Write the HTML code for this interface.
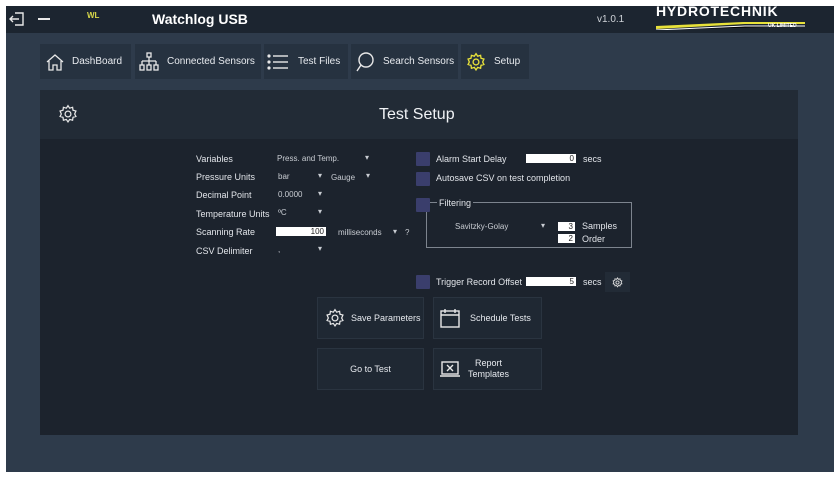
<!DOCTYPE html>
<html><head><meta charset="utf-8"><style>
*{margin:0;padding:0;box-sizing:border-box}
body{width:840px;height:479px;background:#fff;font-family:"Liberation Sans",sans-serif;position:relative;overflow:hidden;color:#e6e9ee}
.a{position:absolute}
#app{left:6px;top:6px;width:828px;height:466px;background:#2e3b4b}
#top{left:6px;top:6px;width:828px;height:27px;background:#1c2530}
.nav{top:44px;height:35px;background:#263240;font-size:10px;color:#e8ebef;display:flex;align-items:center}
.lbl{font-size:9px;color:#e2e5ea}
.dd{font-size:8px;color:#c8ccd2}
.inp{background:#fff;color:#222;font-size:8px;text-align:right;height:9px;line-height:9px;padding-right:2px}
.cb{width:14px;height:14px;background:#3a3e6c;border-radius:1px}
.btn{background:#1f2833;border:1px solid #2a3440;font-size:9px;color:#e6e9ee;display:flex;align-items:center}
svg{display:block}
</style></head><body>
<div class="a" id="app"></div>
<div class="a" id="top"></div>
<svg class="a" style="left:9px;top:11px" width="16" height="16" viewBox="0 0 16 16" fill="none" stroke="#e8e8e8" stroke-width="1.4"><path d="M6 2h8v12H6M1 8h9M4 5L1 8l3 3"/></svg>
<div class="a" style="left:38px;top:18px;width:12px;height:2px;background:#e8e8e8"></div>
<div class="a" style="left:87px;top:11px;font-size:8px;font-weight:bold;color:#d9d94a">WL</div>
<div class="a" style="left:152px;top:11px;font-size:14px;font-weight:bold;color:#fff">Watchlog USB</div>
<div class="a" style="left:597px;top:14px;font-size:10px;color:#cfd3d8">v1.0.1</div>
<div class="a" style="left:656px;top:3px;font-size:14px;font-weight:900;color:#fff;letter-spacing:0.8px">HYDROTECHNIK</div>
<svg class="a" style="left:655px;top:18px" width="152" height="12"><path d="M1 11 L90 6 L150 6 L150 4 L88 4 L1 8Z" fill="#e8e23a"/><path d="M1 12 L90 8 L150 8" stroke="#fff" stroke-width="1"/><text x="113" y="9" font-size="5" fill="#fff" font-family="Liberation Sans" font-weight="bold">UK LIMITED</text></svg>

<div class="a nav" style="left:40px;width:91px"><svg style="margin:0 8px 0 6px" width="18" height="18" viewBox="0 0 18 18" fill="none" stroke="#e8e8e8" stroke-width="1.3"><path d="M1 9L9 2l8 7M3 8v9h4v-5h4v5h4V8"/></svg>DashBoard</div>
<div class="a nav" style="left:135px;width:126px"><svg style="margin:0 8px 0 4px" width="20" height="20" viewBox="0 0 20 20" fill="none" stroke="#e8e8e8" stroke-width="1.3"><rect x="8" y="1" width="4" height="4"/><path d="M10 5v4M3 9h14M3 9v4M10 9v4M17 9v4"/><rect x="1" y="13" width="4" height="5"/><rect x="8" y="13" width="4" height="5"/><rect x="15" y="13" width="4" height="5"/></svg>Connected Sensors</div>
<div class="a nav" style="left:264px;width:84px"><svg style="margin:0 9px 0 3px" width="22" height="18" viewBox="0 0 22 18" fill="#e8e8e8"><circle cx="2" cy="3" r="1.6"/><circle cx="2" cy="9" r="1.6"/><circle cx="2" cy="15" r="1.6"/><rect x="6" y="2.3" width="15" height="1.4"/><rect x="6" y="8.3" width="15" height="1.4"/><rect x="6" y="14.3" width="15" height="1.4"/></svg>Test Files</div>
<div class="a nav" style="left:351px;width:107px"><svg style="margin:0 9px 0 5px" width="18" height="20" viewBox="0 0 18 20" fill="none" stroke="#e8e8e8" stroke-width="1.4"><circle cx="10" cy="8" r="7"/><path d="M5 13L1 19"/></svg>Search Sensors</div>
<div class="a nav" style="left:461px;width:68px"><svg style="margin:0 8px 0 5px" width="20" height="20" viewBox="0 0 24 24" fill="none" stroke="#e8e23a" stroke-width="1.6"><path d="M12 2l2 3 3.5-1 .5 3.5 3.5 1-1.5 3.5 1.5 3-3.5 1-.5 3.5-3.5-1-2 3-2-3-3.5 1-.5-3.5-3.5-1 1.5-3-1.5-3.5 3.5-1 .5-3.5 3.5 1z"/><circle cx="12" cy="12" r="3.5"/></svg>Setup</div>

<div class="a" style="left:40px;top:90px;width:758px;height:345px;background:#1c232d"></div>
<div class="a" style="left:40px;top:90px;width:758px;height:49px;background:#222b36"></div>
<svg class="a" style="left:58px;top:104px" width="20" height="20" viewBox="0 0 24 24" fill="none" stroke="#e8e8e8" stroke-width="1.5"><path d="M12 2l2 3 3.5-1 .5 3.5 3.5 1-1.5 3.5 1.5 3-3.5 1-.5 3.5-3.5-1-2 3-2-3-3.5 1-.5-3.5-3.5-1 1.5-3-1.5-3.5 3.5-1 .5-3.5 3.5 1z"/><circle cx="12" cy="12" r="3.5"/></svg>
<div class="a" style="left:379px;top:106px;font-size:16px;color:#f0f2f5">Test Setup</div>

<div class="a lbl" style="left:196px;top:154px">Variables</div>
<div class="a lbl" style="left:196px;top:172px">Pressure Units</div>
<div class="a lbl" style="left:196px;top:190px">Decimal Point</div>
<div class="a lbl" style="left:196px;top:209px">Temperature Units</div>
<div class="a lbl" style="left:196px;top:227px">Scanning Rate</div>
<div class="a lbl" style="left:196px;top:246px">CSV Delimiter</div>
<div class="a dd" style="left:277px;top:154px">Press. and Temp.</div><div class="a dd" style="left:365px;top:153px">▾</div>
<div class="a dd" style="left:278px;top:172px">bar</div><div class="a dd" style="left:318px;top:171px">▾</div>
<div class="a dd" style="left:331px;top:173px">Gauge</div><div class="a dd" style="left:366px;top:171px">▾</div>
<div class="a dd" style="left:278px;top:190px">0.0000</div><div class="a dd" style="left:318px;top:189px">▾</div>
<div class="a dd" style="left:278px;top:208px">ºC</div><div class="a dd" style="left:318px;top:207px">▾</div>
<div class="a inp" style="left:276px;top:227px;width:50px">100</div>
<div class="a dd" style="left:338px;top:228px">milliseconds</div><div class="a dd" style="left:393px;top:227px">▾</div><div class="a dd" style="left:405px;top:228px">?</div>
<div class="a dd" style="left:278px;top:245px">,</div><div class="a dd" style="left:318px;top:244px">▾</div>

<div class="a cb" style="left:416px;top:152px"></div>
<div class="a lbl" style="left:436px;top:154px">Alarm Start Delay</div>
<div class="a inp" style="left:526px;top:154px;width:50px">0</div>
<div class="a lbl" style="left:583px;top:154px">secs</div>
<div class="a cb" style="left:416px;top:172px"></div>
<div class="a lbl" style="left:436px;top:173px">Autosave CSV on test completion</div>
<div class="a" style="left:426px;top:202px;width:206px;height:46px;border:1px solid #7d848e"></div>
<div class="a cb" style="left:416px;top:198px"></div>
<div class="a lbl" style="left:437px;top:198px;background:#1c232d;padding:0 2px">Filtering</div>
<div class="a dd" style="left:455px;top:222px">Savitzky-Golay</div><div class="a dd" style="left:541px;top:221px">▾</div>
<div class="a inp" style="left:558px;top:222px;width:17px">3</div><div class="a lbl" style="left:582px;top:221px">Samples</div>
<div class="a inp" style="left:558px;top:234px;width:17px">2</div><div class="a lbl" style="left:582px;top:234px">Order</div>
<div class="a cb" style="left:416px;top:275px"></div>
<div class="a lbl" style="left:436px;top:277px">Trigger Record Offset</div>
<div class="a inp" style="left:526px;top:277px;width:50px">5</div>
<div class="a lbl" style="left:583px;top:277px">secs</div>
<div class="a" style="left:605px;top:272px;width:25px;height:20px;background:#222b36"></div>
<svg class="a" style="left:612px;top:277px" width="11" height="11" viewBox="0 0 24 24" fill="none" stroke="#ddd" stroke-width="2"><path d="M12 2l2 3 3.5-1 .5 3.5 3.5 1-1.5 3.5 1.5 3-3.5 1-.5 3.5-3.5-1-2 3-2-3-3.5 1-.5-3.5-3.5-1 1.5-3-1.5-3.5 3.5-1 .5-3.5 3.5 1z"/><circle cx="12" cy="12" r="3.5"/></svg>

<div class="a btn" style="left:317px;top:297px;width:107px;height:42px"><svg style="margin:0 6px 0 7px" width="20" height="20" viewBox="0 0 24 24" fill="none" stroke="#e8e8e8" stroke-width="1.5"><path d="M12 2l2 3 3.5-1 .5 3.5 3.5 1-1.5 3.5 1.5 3-3.5 1-.5 3.5-3.5-1-2 3-2-3-3.5 1-.5-3.5-3.5-1 1.5-3-1.5-3.5 3.5-1 .5-3.5 3.5 1z"/><circle cx="12" cy="12" r="3.5"/></svg>Save Parameters</div>
<div class="a btn" style="left:433px;top:297px;width:109px;height:42px"><svg style="margin:0 10px 0 6px" width="20" height="20" viewBox="0 0 20 20" fill="none" stroke="#e8e8e8" stroke-width="1.4"><rect x="1" y="3" width="18" height="16"/><path d="M1 7h18M5 1v4M15 1v4"/></svg>Schedule Tests</div>
<div class="a btn" style="left:317px;top:348px;width:107px;height:42px;justify-content:center">Go to Test</div>
<div class="a btn" style="left:433px;top:348px;width:109px;height:42px"><svg style="margin:0 8px 0 6px" width="20" height="18" viewBox="0 0 20 18" fill="none" stroke="#e8e8e8" stroke-width="1.4"><rect x="2" y="2" width="16" height="12"/><path d="M0 16h20M7 5l6 6M13 5l-6 6"/></svg><span style="text-align:center;line-height:11px">Report<br>Templates</span></div>
</body></html>
